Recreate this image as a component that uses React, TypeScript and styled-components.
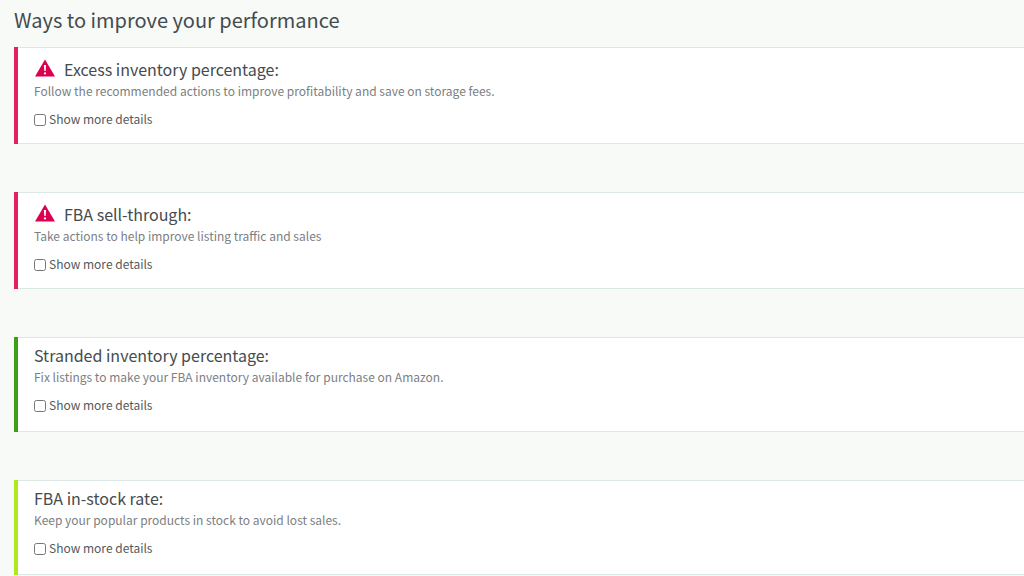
import React from "react";
import styled, { createGlobalStyle } from "styled-components";

const GlobalStyle = createGlobalStyle`
  *, *::before, *::after { box-sizing: border-box; }
  body { margin: 0; background: #f8faf8; color: #454b4e; font-family: "Noto Sans CJK SC", "Noto Sans", sans-serif; }
`;

const Page = styled.main`
  padding: 8px 0 0 14px;
`;

const PageTitle = styled.h1`
  margin: 0 0 15px;
  font-size: 20px;
  line-height: 24px;
  font-weight: 400;
`;

const List = styled.div`
  display: flex;
  flex-direction: column;
  gap: 48px;
`;

const Card = styled.section<{ $accent: string; $alert: boolean }>`
  position: relative;
  padding: ${(p) => (p.$alert ? "9px 20px 16px" : "5px 20px 18px")};
  background: #fff;
  border: solid #dbe8e3;
  border-width: 1px 0;

  &::before {
    content: "";
    position: absolute;
    top: -1px;
    bottom: -1px;
    left: 0;
    width: 4px;
    background: ${(p) => p.$accent};
  }
`;

const CardTitle = styled.h2`
  display: flex;
  align-items: center;
  gap: 9px;
  margin: 0;
  font-size: 16px;
  line-height: 24px;
  font-weight: 400;
`;

const Description = styled.p`
  margin: 0 0 10px;
  font-size: 12px;
  line-height: 20px;
  color: #7c8082;
`;

const Toggle = styled.label`
  display: flex;
  align-items: center;
  gap: 3px;
  width: fit-content;
  font-size: 12px;
  line-height: 16px;
  color: #54595c;
`;

const Checkbox = styled.input`
  width: 12px;
  height: 12px;
  margin: 2px 0 0;
`;

const Icon = styled.svg`
  display: block;
  flex: none;
  margin-bottom: 3px;
`;

const AlertIcon = () => (
  <Icon width="21" height="18" viewBox="0 0 21 18" aria-hidden="true">
    <path d="M11 0.5 L21 17.5 H1 Z" fill="#dc0050" />
    <path d="M9.9 6 H12.1 L11.7 12 H10.3 Z" fill="#fff" />
    <circle cx="11" cy="14.4" r="1.1" fill="#fff" />
  </Icon>
);

const items = [
  { title: "Excess inventory percentage:", text: "Follow the recommended actions to improve profitability and save on storage fees.", accent: "#e61e64", alert: true },
  { title: "FBA sell-through:", text: "Take actions to help improve listing traffic and sales", accent: "#e61e64", alert: true },
  { title: "Stranded inventory percentage:", text: "Fix listings to make your FBA inventory available for purchase on Amazon.", accent: "#3c9f16", alert: false },
  { title: "FBA in-stock rate:", text: "Keep your popular products in stock to avoid lost sales.", accent: "#afe81c", alert: false },
];

export default function App() {
  return (
    <>
      <GlobalStyle />
      <Page>
        <PageTitle>Ways to improve your performance</PageTitle>
        <List>
          {items.map((item) => (
            <Card key={item.title} $accent={item.accent} $alert={item.alert}>
              <CardTitle>
                {item.alert && <AlertIcon />}
                {item.title}
              </CardTitle>
              <Description>{item.text}</Description>
              <Toggle>
                <Checkbox type="checkbox" />
                Show more details
              </Toggle>
            </Card>
          ))}
        </List>
      </Page>
    </>
  );
}
